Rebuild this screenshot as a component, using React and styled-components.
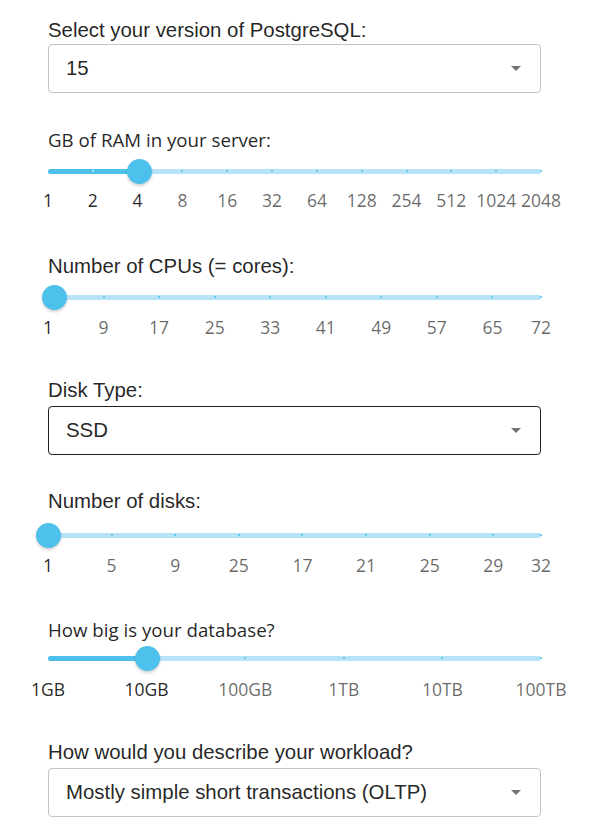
import styled, { createGlobalStyle } from "styled-components";

const GlobalStyle = createGlobalStyle`
  body {
    margin: 0;
    background: #fff;
    font-family: "Liberation Sans", Arial, sans-serif;
  }
`;

const Form = styled.main`
  width: 493px;
  margin: 0 48px;
  padding-top: 17px;
  display: flex;
  flex-direction: column;
`;

const Field = styled.section`
  display: flex;
  flex-direction: column;
  margin-bottom: ${(p) => p.$gap || 0}px;
`;

const Label = styled.label`
  font-family: ${(p) =>
    p.$soft ? '"Open Sans", "Noto Sans", sans-serif' : '"Liberation Sans", Arial, sans-serif'};
  font-size: ${(p) => (p.$soft ? 18.7 : 20.4)}px;
  line-height: 26px;
  color: rgba(0, 0, 0, 0.87);
  margin-bottom: ${(p) => p.$space || 1}px;
`;

const SelectBox = styled.div`
  height: 49px;
  box-sizing: border-box;
  border: 1px solid ${(p) => (p.$focused ? "rgba(0,0,0,0.87)" : "#c4c4c4")};
  border-radius: 4px;
  display: flex;
  align-items: center;
  justify-content: space-between;
  padding: 0 19px 0 17px;
  font-size: 20.4px;
  color: rgba(0, 0, 0, 0.87);
`;

const Arrow = styled.span`
  width: 0;
  height: 0;
  border-left: 5px solid transparent;
  border-right: 5px solid transparent;
  border-top: 5px solid #757575;
`;

const SliderRoot = styled.div`
  position: relative;
  height: 26px;
`;

const Rail = styled.div`
  position: absolute;
  left: 0;
  right: 0;
  top: 50%;
  height: 5px;
  margin-top: -2.5px;
  border-radius: 3px;
  background: #b6e3f7;
`;

const Fill = styled.div`
  position: absolute;
  left: 0;
  top: 50%;
  height: 5px;
  margin-top: -2.5px;
  border-radius: 3px;
  background: #4ec0ec;
`;

const Dot = styled.span`
  position: absolute;
  top: 50%;
  width: 2px;
  height: 2px;
  margin: -1px 0 0 -1px;
  border-radius: 1px;
  background: ${(p) => (p.$active ? "rgba(255,255,255,0.8)" : "#4ec0ec")};
`;

const Thumb = styled.span`
  position: absolute;
  top: 50%;
  width: 25px;
  height: 25px;
  margin: -12.5px 0 0 -12.5px;
  border-radius: 50%;
  background: #4ec0ec;
  box-shadow: 0 2px 3px rgba(0, 0, 0, 0.18);
`;

const Ticks = styled.div`
  position: relative;
  height: 22px;
  margin-top: ${(p) => p.$offset || 5}px;
`;

const Tick = styled.span`
  position: absolute;
  top: 0;
  transform: translateX(-50%);
  white-space: nowrap;
  font-family: "Open Sans", "Noto Sans", sans-serif;
  font-size: 17.5px;
  line-height: 22px;
  color: ${(p) => (p.$active ? "rgba(0,0,0,0.87)" : "rgba(0,0,0,0.6)")};
`;

const Select = ({ value, focused }) => (
  <SelectBox $focused={focused}>
    <span>{value}</span>
    <Arrow />
  </SelectBox>
);

const Slider = ({ marks, value, positions, offset }) => {
  const pos = (i) => (positions ? positions[i] : (i / (marks.length - 1)) * 100);
  return (
    <>
      <SliderRoot>
        <Rail />
        <Fill style={{ width: `${value}%` }} />
        {marks.map((m, i) =>
          i === 0 ? null : (
            <Dot key={i} $active={pos(i) < value} style={{ left: `${pos(i)}%` }} />
          )
        )}
        <Thumb style={{ left: `${value}%` }} />
      </SliderRoot>
      <Ticks $offset={offset}>
        {marks.map((m, i) => (
          <Tick key={i} $active={pos(i) <= value + 1} style={{ left: `${pos(i)}%` }}>
            {m}
          </Tick>
        ))}
      </Ticks>
    </>
  );
};

const ram = ["1", "2", "4", "8", "16", "32", "64", "128", "254", "512", "1024", "2048"];
const cpuVals = [1, 9, 17, 25, 33, 41, 49, 57, 65, 72];
const diskVals = [1, 5, 9, 13, 17, 21, 25, 29, 32];
const diskLabels = ["1", "5", "9", "25", "17", "21", "25", "29", "32"];
const dbSizes = ["1GB", "10GB", "100GB", "1TB", "10TB", "100TB"];

const App = () => (
  <>
    <GlobalStyle />
    <Form>
      <Field $gap={34}>
        <Label>Select your version of PostgreSQL:</Label>
        <Select value="15" />
      </Field>

      <Field $gap={42}>
        <Label $soft $space={5}>GB of RAM in your server:</Label>
        <Slider marks={ram} value={18.6} offset={5} />
      </Field>

      <Field $gap={39}>
        <Label $space={5}>Number of CPUs (= cores):</Label>
        <Slider
          marks={cpuVals.map(String)}
          value={1.4}
          positions={cpuVals.map((v) => ((v - 1) / 71) * 100)}
          offset={6}
        />
      </Field>

      <Field $gap={33}>
        <Label $space={3}>Disk Type:</Label>
        <Select value="SSD" focused />
      </Field>

      <Field $gap={41}>
        <Label $space={8}>Number of disks:</Label>
        <Slider
          marks={diskLabels}
          value={0}
          positions={diskVals.map((v) => ((v - 1) / 31) * 100)}
          offset={6}
        />
      </Field>

      <Field $gap={39}>
        <Label $soft $space={2}>How big is your database?</Label>
        <Slider marks={dbSizes} value={20.2} offset={7} />
      </Field>

      <Field>
        <Label $space={3}>How would you describe your workload?</Label>
        <Select value="Mostly simple short transactions (OLTP)" />
      </Field>
    </Form>
  </>
);

export default App;
